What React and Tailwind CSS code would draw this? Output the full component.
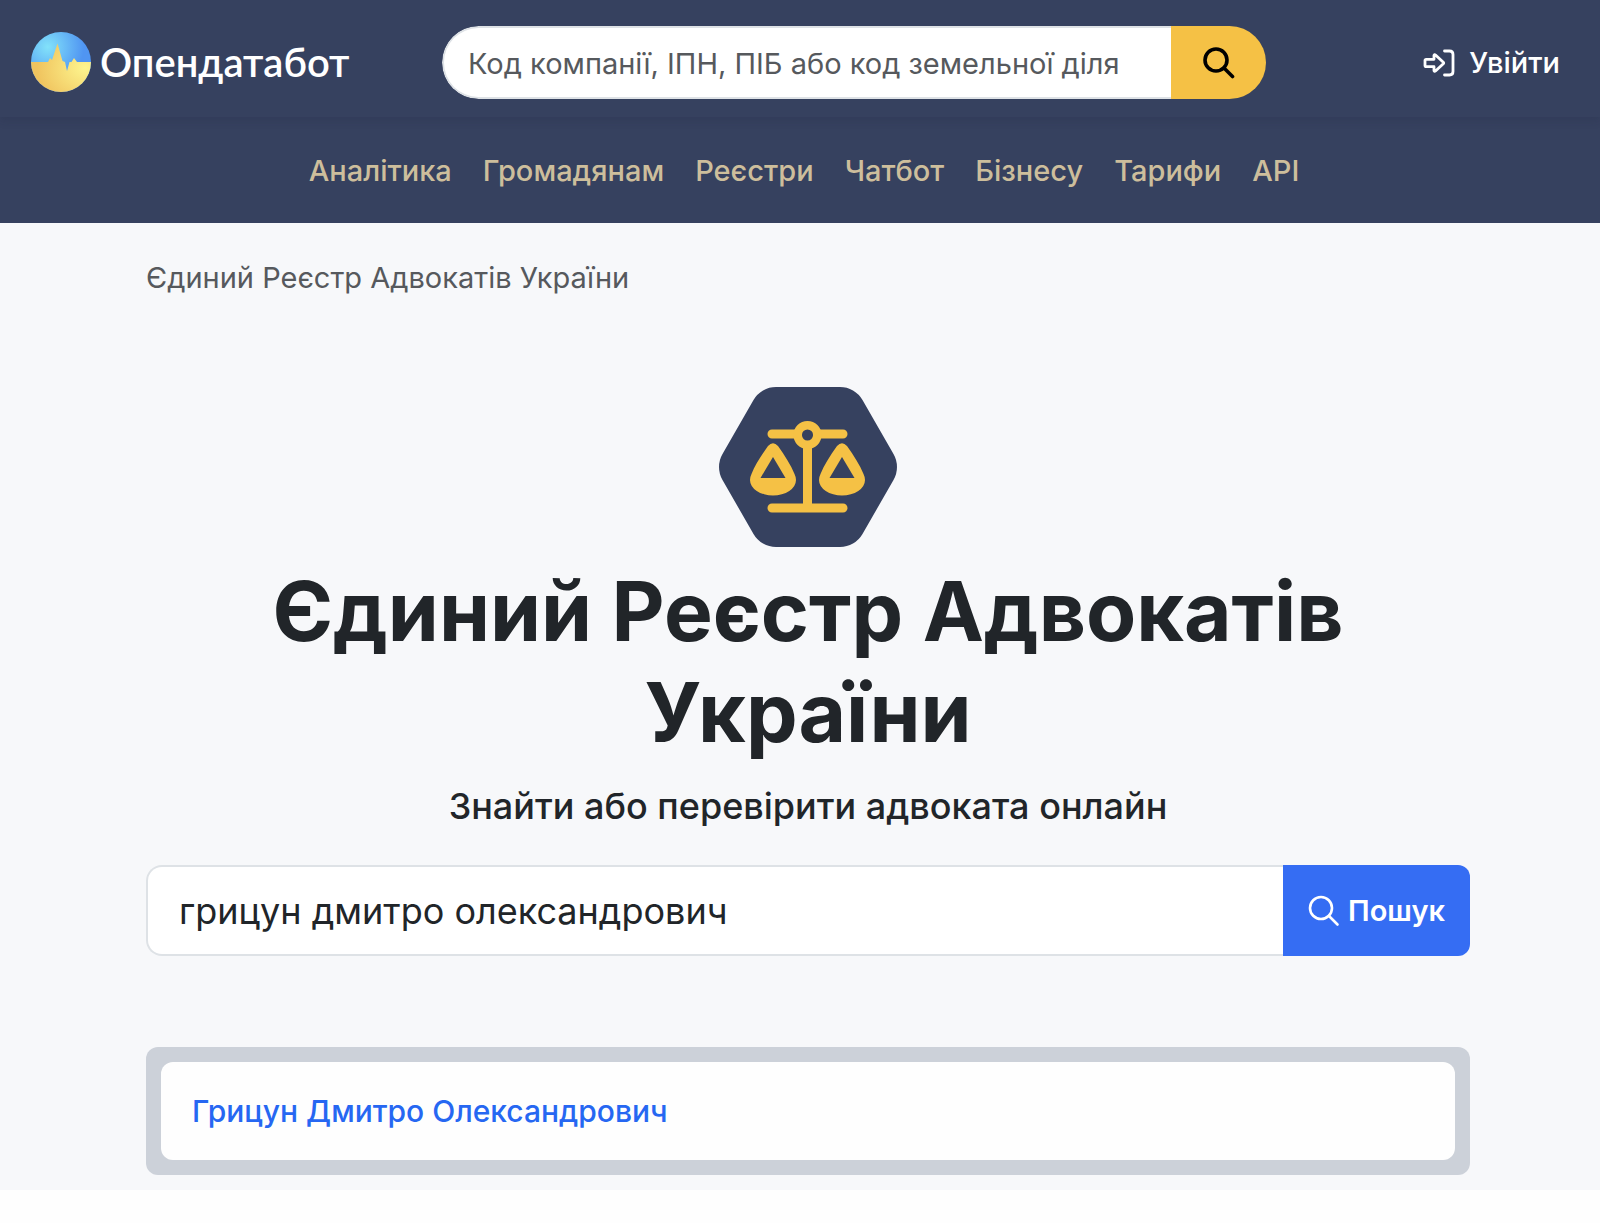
const navItems = ["Аналітика", "Громадянам", "Реєстри", "Чатбот", "Бізнесу", "Тарифи", "API"];

function LogoMark() {
  return (
    <svg viewBox="0 0 60 60" className="size-[60px] shrink-0" aria-hidden="true">
      <defs>
        <radialGradient id="sky" cx="0.28" cy="0.25" r="0.6">
          <stop offset="0" stopColor="#82e2fa" />
          <stop offset="1" stopColor="#5095f2" />
        </radialGradient>
        <radialGradient id="field" cx="0.9" cy="0.5" r="0.8">
          <stop offset="0" stopColor="#fdf58e" />
          <stop offset="1" stopColor="#f0c45f" />
        </radialGradient>
        <clipPath id="disc">
          <circle cx="30" cy="30" r="30" />
        </clipPath>
      </defs>
      <g clipPath="url(#disc)">
        <rect width="60" height="60" fill="url(#sky)" />
        <path d="M0 30H17L19 26L21 28L26.500 11.500L31.500 29L34 30L36 39L38.500 30H40.500L43 26L46 30H60V60H0Z" fill="url(#field)" />
      </g>
    </svg>
  );
}

function SearchIcon({ className, strokeWidth }) {
  return (
    <svg viewBox="0 0 32 32" className={className} fill="none" stroke="currentColor" strokeWidth={strokeWidth} strokeLinecap="round" aria-hidden="true">
      <circle cx="13" cy="13" r="11" />
      <path d="M21 21L29.500 29.500" />
    </svg>
  );
}

function LoginIcon() {
  return (
    <svg viewBox="0 0 32 28" className="h-[28px] w-[32px]" fill="none" stroke="currentColor" strokeWidth="2.800" strokeLinejoin="round" strokeLinecap="round" aria-hidden="true">
      <path d="M2 11.500Q2 10.300 3.200 10.300H11V6.300Q11.500 5.200 12.500 6L20.300 13.200Q21.100 14 20.300 14.800L12.500 22Q11.500 22.800 11 21.700V17.700H3.200Q2 17.700 2 16.500Z" />
      <path d="M21.500 2H26.500Q30 2 30 5.500V22.500Q30 26 26.500 26H21.500" />
    </svg>
  );
}

function ScalesBadge() {
  return (
    <svg viewBox="0 0 178 162" className="h-[162px] w-[178px]" aria-hidden="true">
      <path
        d="M57 1H121A26 26 0 0 1 143.500 14L174.500 68A26 26 0 0 1 174.500 94L143.500 148A26 26 0 0 1 121 161H57A26 26 0 0 1 34.500 148L3.500 94A26 26 0 0 1 3.500 68L34.500 14A26 26 0 0 1 57 1Z"
        fill="#36415f"
      />
      <path d="M53 48H124M53 122H124M88.500 60V121" stroke="#f5c145" strokeWidth="9" strokeLinecap="round" fill="none" />
      <circle cx="88.500" cy="49" r="9.800" fill="#36415f" stroke="#f5c145" strokeWidth="8.500" />
      {[54, 123].map((x) => (
        <g key={x} transform={`translate(${x} 0)`}>
          <path d="M-5 60Q0 54.500 5 60C12 70 18 79 21.500 88Q23 91 23 94A23 15.500 0 0 1 -23 94Q-23 91 -21.500 88C-18 79 -12 70 -5 60Z" fill="#f5c145" />
          <path d="M0 71L12.500 92H-12.500Z" fill="#36415f" />
        </g>
      ))}
    </svg>
  );
}

export default function App() {
  return (
    <div className="min-h-screen bg-[#fefefe] font-['Inter','Liberation_Sans',sans-serif] text-[#212529]">
      <header className="bg-[#36415f]">
        <div className="flex items-center justify-between pt-[26px] pr-[40px] pb-[18px] pl-[31px] shadow-[0_4px_8px_rgba(33,37,60,0.16)]">
          <a href="#" className="flex w-[411px] items-center gap-[9px] pb-[2px] text-white">
            <LogoMark />
            <span className="font-['Lato','Noto_Sans',sans-serif] text-[40px] leading-[60px] font-semibold">Опендатабот</span>
          </a>
          <form className="flex h-[73px] w-[824px] overflow-hidden rounded-full">
            <input
              type="text"
              aria-label="Пошук компанії"
              placeholder="Код компанії, ІПН, ПІБ або код земельної діля"
              className="min-w-0 flex-1 rounded-l-full border-2 border-r-0 border-[#dee2e6] bg-white pt-[2px] pl-[24px] text-[29px] outline-none placeholder:text-[#56595d] placeholder:opacity-100"
            />
            <button type="button" aria-label="Шукати" className="flex w-[95px] items-center justify-center bg-[#f5c145] text-black">
              <SearchIcon className="size-[32px]" strokeWidth="3.600" />
            </button>
          </form>
          <a href="#" className="ml-auto flex items-center gap-[14px] text-[29px] leading-[46px] font-medium text-white">
            <LoginIcon />
            Увійти
          </a>
        </div>
        <nav className="flex justify-center gap-[31px] pt-[31px] pb-[29px] pl-[8px] text-[29px] leading-[46px] font-medium text-[#cdbe9c]">
          {navItems.map((item) => (
            <a key={item} href="#">{item}</a>
          ))}
        </nav>
      </header>

      <main className="bg-[#f7f8fa] pt-[32px] pr-[130px] pb-[15px] pl-[146px]">
        <p className="text-[29px] leading-[46px] text-[#56595d]">Єдиний Реєстр Адвокатів України</p>

        <section className="mt-[85px] flex flex-col items-center text-center">
          <ScalesBadge />
          <h1 className="mt-[13px] max-w-[1200px] text-[82px] leading-[101px] font-bold">Єдиний Реєстр Адвокатів України</h1>
          <h2 className="mt-[19px] text-[36px] leading-[48px] font-medium">Знайти або перевірити адвоката онлайн</h2>
        </section>

        <form className="mt-[35px] flex h-[91px]">
          <input
            type="text"
            aria-label="Ім’я адвоката"
            defaultValue="грицун дмитро олександрович"
            className="min-w-0 flex-1 rounded-l-[16px] border-2 border-r-0 border-[#dee2e6] bg-white pl-[31px] text-[36px] outline-none"
          />
          <button type="button" className="flex w-[187px] items-center justify-center gap-[8px] rounded-r-[12px] bg-[#356df3] text-[29px] font-semibold text-white">
            <SearchIcon className="size-[32px]" strokeWidth="2.600" />
            Пошук
          </button>
        </form>

        <section className="mt-[91px] rounded-[12px] bg-[#ccd1d9] p-[15px]">
          <div className="rounded-[12px] bg-[#fefefe] px-[31px] py-[26px]">
            <a href="#" className="text-[30px] leading-[46px] font-medium text-[#2667f2]">Грицун Дмитро Олександрович</a>
          </div>
        </section>
      </main>
    </div>
  );
}
